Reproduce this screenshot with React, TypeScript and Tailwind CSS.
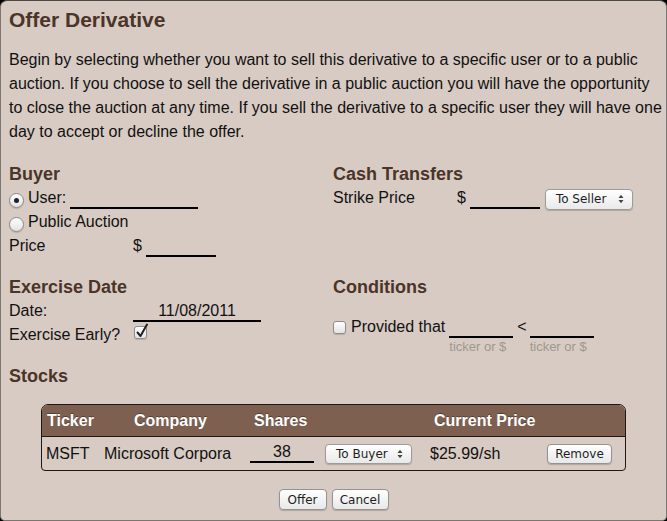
import React from "react";

function Underline({ className, children }: { className: string; children?: React.ReactNode }) {
  return (
    <span className={`inline-block border-b-2 border-black leading-[16px] pb-[1px] text-center whitespace-nowrap ${className}`}>
      {children ?? "\u00a0"}
    </span>
  );
}

function Arrows() {
  return (
    <svg width="6" height="10" viewBox="0 0 6 10" className="shrink-0">
      <path d="M0.5 4 L3 0.8 L5.5 4 Z" fill="#444" />
      <path d="M0.5 6 L3 9.2 L5.5 6 Z" fill="#444" />
    </svg>
  );
}

function Select({ label, className }: { label: string; className: string }) {
  return (
    <span
      className={`flex items-center justify-between rounded-[4px] border border-[#9b9b9b] bg-linear-to-b from-white to-[#e9e9e9] pl-[10px] pr-[8px] text-[12px] leading-[14px] text-[#1e1e1e] shadow-[0_1px_1px_rgba(0,0,0,0.18)] font-['DejaVu_Sans',sans-serif] ${className}`}
    >
      <span>{label}</span>
      <Arrows />
    </span>
  );
}

function Button({ label, className }: { label: string; className: string }) {
  return (
    <span
      className={`flex items-center justify-center rounded-[4px] border border-[#939393] bg-linear-to-b from-white to-[#e8e8e8] text-[12px] leading-[14px] text-[#1e1e1e] shadow-[0_1px_1px_rgba(0,0,0,0.18)] font-['DejaVu_Sans',sans-serif] ${className}`}
    >
      {label}
    </span>
  );
}

function Radio({ checked }: { checked?: boolean }) {
  return (
    <span className="relative top-[2px] flex h-[15px] w-[15px] shrink-0 items-center justify-center self-center rounded-full border border-[#8a8a8a] bg-linear-to-b from-white to-[#e2e2e2] shadow-[0_1px_1px_rgba(0,0,0,0.15)]">
      {checked && <span className="h-[5px] w-[5px] rounded-full bg-[#222]" />}
    </span>
  );
}

function Checkbox({ checked, className }: { checked?: boolean; className: string }) {
  return (
    <span
      className={`relative inline-block h-[13px] w-[13px] shrink-0 rounded-[3px] border border-[#8c8c8c] bg-linear-to-b from-white to-[#e4e4e4] shadow-[0_1px_1px_rgba(0,0,0,0.15)] ${className}`}
    >
      {checked && (
        <svg width="15" height="17" viewBox="0 0 15 17" className="absolute left-[0px] top-[-5px]">
          <path d="M2.5 10.5 L5.5 14 L12 2.5" fill="none" stroke="#222" strokeWidth="2" strokeLinecap="round" strokeLinejoin="round" />
        </svg>
      )}
    </span>
  );
}

function Heading({ children }: { children: React.ReactNode }) {
  return <h2 className="text-[18px] font-bold leading-[24px] text-[#4b3428]">{children}</h2>;
}

export default function App() {
  return (
    <div className="h-[521px] w-[667px] bg-black">
      <div className="h-full rounded-t-[7px] rounded-b-[5px] border border-[#7b7672] border-t-[#4a4643] bg-[#d8cbc3] px-[8px] pt-[7px] text-[16px] text-[#111] font-['Liberation_Sans',Arial,sans-serif]">
        <h1 className="text-[21px] font-bold leading-[24px] text-[#4b3428]">Offer Derivative</h1>
        <p className="mt-[16px] whitespace-nowrap leading-[24px]">
          Begin by selecting whether you want to sell this derivative to a specific user or to a public
          <br />
          auction. If you choose to sell the derivative in a public auction you will have the opportunity
          <br />
          to close the auction at any time. If you sell the derivative to a specific user they will have one
          <br />
          day to accept or decline the offer.
        </p>

        <div className="mt-[18px] grid grid-cols-[324px_1fr] gap-y-[17px] leading-[24px]">
          {/* Buyer */}
          <div>
            <Heading>Buyer</Heading>
            <div className="flex h-[24px] items-baseline">
              <Radio checked />
              <span className="ml-[4px]">User:</span>
              <Underline className="ml-[4px] w-[128px]" />
            </div>
            <div className="flex h-[24px] items-baseline">
              <Radio />
              <span className="ml-[4px]">Public Auction</span>
            </div>
            <div className="flex h-[24px] items-baseline">
              <span className="w-[124px]">Price</span>
              <span>$</span>
              <Underline className="ml-[4px] w-[70px]" />
            </div>
          </div>

          {/* Cash transfers */}
          <div>
            <Heading>Cash Transfers</Heading>
            <div className="flex h-[24px] items-baseline">
              <span className="w-[124px]">Strike Price</span>
              <span>$</span>
              <Underline className="ml-[4px] w-[70px]" />
              <Select label="To Seller" className="relative top-[1px] ml-[5px] h-[21px] w-[88px] self-center" />
            </div>
          </div>

          {/* Exercise date */}
          <div>
            <Heading>Exercise Date</Heading>
            <div className="flex h-[24px] items-baseline">
              <span className="w-[124px]">Date:</span>
              <Underline className="w-[128px]">11/08/2011</Underline>
            </div>
            <div className="flex h-[24px] items-start">
              <span className="w-[125px]">Exercise Early?</span>
              <Checkbox checked className="mt-[3px]" />
            </div>
          </div>

          {/* Conditions */}
          <div className="h-[72px]">
            <Heading>Conditions</Heading>
            <div className="mt-[16px] flex items-baseline">
              <Checkbox className="self-start mt-[6px]" />
              <span className="ml-[5px]">Provided that</span>
              <span className="ml-[4px] flex flex-col">
                <Underline className="w-[64px]" />
                <span className="mt-[1px] text-[13px] leading-[16px] text-[#a0978f]">ticker or $</span>
              </span>
              <span className="ml-[4px]">&lt;</span>
              <span className="ml-[3px] flex flex-col">
                <Underline className="w-[64px]" />
                <span className="mt-[1px] text-[13px] leading-[16px] text-[#a0978f]">ticker or $</span>
              </span>
            </div>
          </div>
        </div>

        <div className="mt-[17px]">
          <Heading>Stocks</Heading>
        </div>

        <div className="mx-[32px] mt-[16px] overflow-hidden rounded-t-[7px] rounded-b-[4px] border border-[#1e1712] leading-[24px]">
          <div className="flex h-[32px] items-center border-b border-[#1e1712] bg-[#7d6050] font-bold text-white [text-shadow:0_-1px_0_rgba(0,0,0,0.35)]">
            <span className="w-[58px] pl-[5px]">Ticker</span>
            <span className="w-[145px] pl-[34px]">Company</span>
            <span className="w-[75px] pl-[9px]">Shares</span>
            <span className="w-[100px]" />
            <span className="w-[120px] pl-[14px] whitespace-nowrap">Current Price</span>
          </div>
          <div className="flex h-[33px] items-center">
            <span className="w-[58px] pl-[4px]">MSFT</span>
            <span className="w-[145px] pl-[4px] whitespace-nowrap">Microsoft Corpora</span>
            <span className="flex w-[75px] items-baseline pl-[5px]">
              <Underline className="w-[64px]">38</Underline>
            </span>
            <span className="w-[100px] pl-[5px]">
              <Select label="To Buyer" className="h-[20px] w-[87px]" />
            </span>
            <span className="w-[120px] pl-[10px]">$25.99/sh</span>
            <span className="w-[84px] pl-[7px]">
              <Button label="Remove" className="h-[20px] w-[65px]" />
            </span>
          </div>
        </div>

        <div className="mt-[18px] flex justify-center gap-[5px]">
          <Button label="Offer" className="h-[21px] w-[48px]" />
          <Button label="Cancel" className="h-[21px] w-[57px]" />
        </div>
      </div>
    </div>
  );
}
